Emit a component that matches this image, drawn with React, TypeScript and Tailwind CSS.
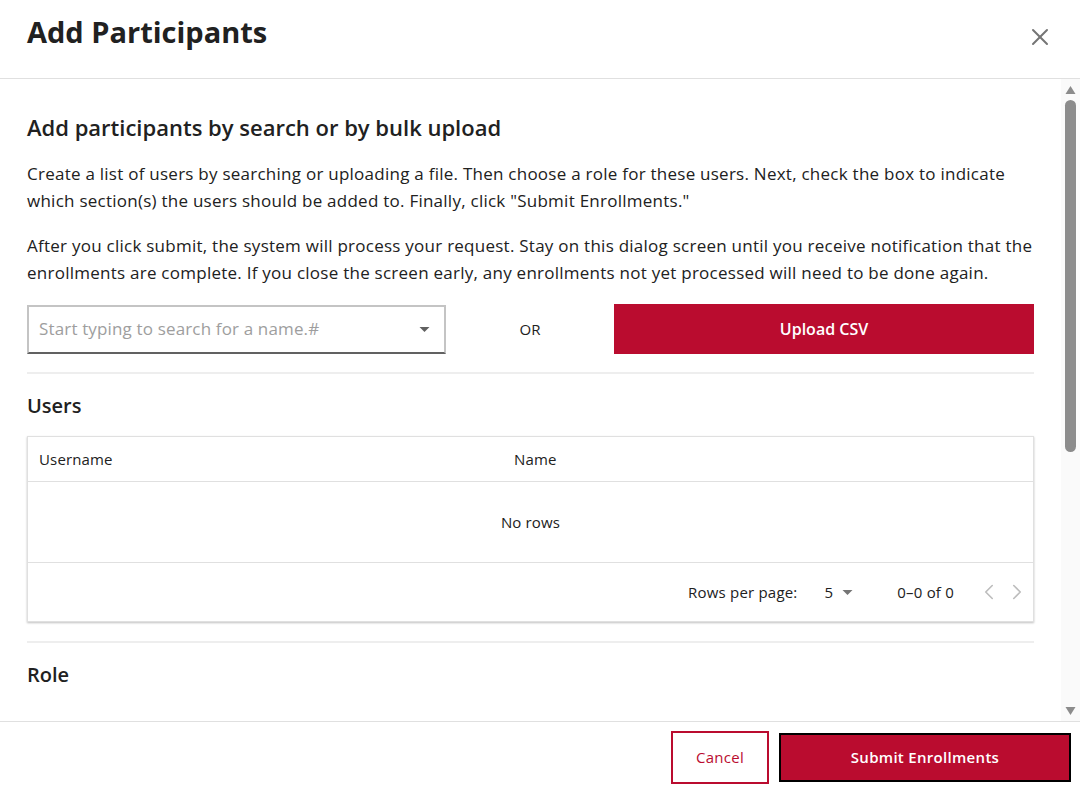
import { ChevronLeft, ChevronRight, X } from "lucide-react"

function Caret({ className = "" }: { className?: string }) {
    return (
        <svg viewBox="0 0 10 5" className={className} fill="currentColor">
            <path d="M0 0 L5 5 L10 0 Z" />
        </svg>
    )
}

function SelectBox({ placeholder }: { placeholder: string }) {
    return (
        <div className="flex h-[49px] w-[419px] shrink-0 items-center justify-between border-2 border-[#c4c4c4] border-b-[#616161] pl-[10px] pr-[14px]">
            <span className="text-[17px] tracking-[0.15px] text-[#9e9e9e]">{placeholder}</span>
            <Caret className="h-[5px] w-[11px] text-[#616161]" />
        </div>
    )
}

function Scrollbar() {
    return (
        <div className="flex w-[19px] shrink-0 flex-col items-center bg-[#fafafa]">
            <svg viewBox="0 0 10 8" className="mt-[7px] h-[8px] w-[11px] text-[#8c8c8c]" fill="currentColor">
                <path d="M5 0 L10 8 L0 8 Z" />
            </svg>
            <div className="mt-[6px] h-[352px] w-[11px] rounded-full bg-[#8c8c8c]" />
            <div className="flex-1" />
            <svg viewBox="0 0 10 8" className="mb-[6px] h-[8px] w-[11px] text-[#8c8c8c]" fill="currentColor">
                <path d="M0 0 L10 0 L5 8 Z" />
            </svg>
        </div>
    )
}

export default function App() {
    const font = { fontFamily: "'Open Sans', sans-serif" }

    return (
        <div className="flex h-[790px] w-full flex-col bg-white text-[#212121]" style={font}>
            {/* Header */}
            <div className="flex h-[79px] shrink-0 items-start justify-between border-b border-[#e0e0e0] pl-[27px] pr-[26px] pt-[14px]">
                <h1 className="text-[29px] font-bold leading-[36px]">Add Participants</h1>
                <button className="mt-[9px] text-[#757575]">
                    <X className="h-[28px] w-[28px]" strokeWidth={1.7} />
                </button>
            </div>

            {/* Body */}
            <div className="flex min-h-0 flex-1">
                <div className="min-w-0 flex-1 overflow-hidden">
                    <div className="px-[27px] pb-[40px] pt-[34px]">
                        <h2 className="text-[22px] font-semibold leading-[28px]">Add participants by search or by bulk upload</h2>
                        <p className="mt-[19px] text-[17px] leading-[27px] tracking-[0.25px]">
                            Create a list of users by searching or uploading a file. Then choose a role for these users. Next, check the box to indicate
                            which section(s) the users should be added to. Finally, click "Submit Enrollments."
                        </p>
                        <p className="mt-[18px] text-[17px] leading-[27px] tracking-[0.25px]">
                            After you click submit, the system will process your request. Stay on this dialog screen until you receive notification that the
                            enrollments are complete. If you close the screen early, any enrollments not yet processed will need to be done again.
                        </p>

                        <div className="mt-[18px] flex items-center">
                            <SelectBox placeholder="Start typing to search for a name.#" />
                            <div className="flex-1 text-center text-[15px]">OR</div>
                            <button className="h-[50px] w-[420px] shrink-0 bg-[#ba0c2f] text-[16px] font-semibold text-white">Upload CSV</button>
                        </div>

                        <div className="mt-[18px] h-[2px] bg-[#eeeeee]" />

                        <h3 className="mt-[18px] text-[20px] font-semibold leading-[28px]">Users</h3>

                        <div className="mt-[16px] border border-[#e0e0e0] shadow-[0_1px_2px_rgba(0,0,0,0.25)]">
                            <div className="flex h-[45px] items-center border-b border-[#e0e0e0] text-[15px] tracking-[0.15px]">
                                <div className="w-[486px] pl-[11px]">Username</div>
                                <div>Name</div>
                            </div>
                            <div className="flex h-[81px] items-center justify-center border-b border-[#e0e0e0] text-[15px] tracking-[0.15px]">
                                No rows
                            </div>
                            <div className="flex h-[58px] items-center justify-end pr-[3px] text-[15px] tracking-[0.2px]">
                                <span>Rows per page:</span>
                                <span className="ml-[27px] flex items-center gap-[9px]">
                                    5
                                    <Caret className="h-[5px] w-[11px] text-[#757575]" />
                                </span>
                                <span className="ml-[44px]">0–0 of 0</span>
                                <span className="ml-[22px] flex items-center gap-[2px] text-[#bdbdbd]">
                                    <ChevronLeft className="h-[26px] w-[26px]" strokeWidth={1.5} />
                                    <ChevronRight className="h-[26px] w-[26px]" strokeWidth={1.5} />
                                </span>
                            </div>
                        </div>

                        <div className="mt-[19px] h-[2px] bg-[#eeeeee]" />

                        <h3 className="mt-[18px] text-[20px] font-semibold leading-[28px]">Role</h3>
                        <div className="mt-[36px]">
                            <SelectBox placeholder="Select a role" />
                        </div>
                    </div>
                </div>
                <Scrollbar />
            </div>

            {/* Footer */}
            <div className="flex h-[69px] shrink-0 items-start justify-end gap-[10px] border-t border-[#e0e0e0] pr-[9px] pt-[9px]">
                <button className="h-[53px] w-[98px] border-2 border-[#ba0c2f] text-[15px] tracking-[0.3px] text-[#ba0c2f]">Cancel</button>
                <button className="mt-[2px] h-[49px] w-[292px] border-2 border-black bg-[#ba0c2f] text-[15px] font-semibold tracking-[0.3px] text-white">
                    Submit Enrollments
                </button>
            </div>
        </div>
    )
}
